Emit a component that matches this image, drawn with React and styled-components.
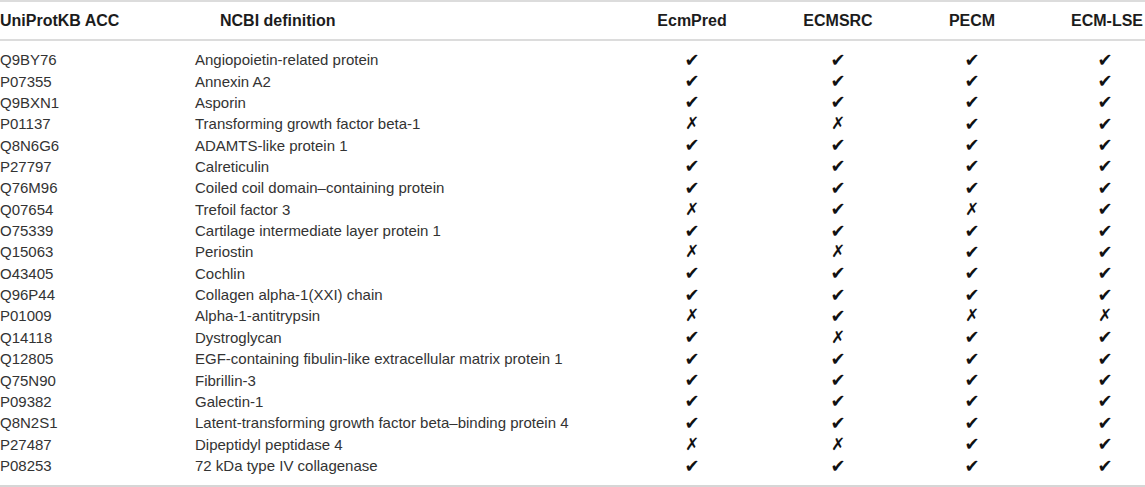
import React from 'react';
import styled, { createGlobalStyle } from 'styled-components';

const GlobalStyle = createGlobalStyle`
  html, body {
    margin: 0;
    padding: 0;
    background: #ffffff;
  }
  body {
    font-family: "Liberation Sans", Arial, sans-serif;
  }
`;

const COLUMNS = '195px 424px 146px 146px 122px 1fr';

const Table = styled.div`
  width: 1145px;
  border-top: 2px solid #dcdcdc;
  border-bottom: 2px solid #d6d6d6;
  overflow: hidden;
`;

const HeaderRow = styled.div`
  display: grid;
  grid-template-columns: ${COLUMNS};
  height: 37px;
  align-items: center;
  border-bottom: 2px solid #dcdcdc;
`;

const HeadCell = styled.div`
  font-size: 16px;
  font-weight: 700;
  color: #1c1c1c;
  white-space: nowrap;
  text-align: ${p => (p.$center ? 'center' : 'left')};
  padding-left: ${p => p.$indent || 0}px;
`;

const Body = styled.div`
  padding: 8px 0 9px;
`;

const Row = styled.div`
  display: grid;
  grid-template-columns: ${COLUMNS};
  height: 21.37px;
  align-items: center;
`;

const Cell = styled.div`
  font-size: 15px;
  color: #333333;
  white-space: nowrap;
`;

const Mark = styled.div`
  font-family: "DejaVu Sans", sans-serif;
  font-size: ${p => (p.$ok ? '18px' : '17px')};
  color: #111;
  text-align: center;
  padding-left: ${p => p.$indent || 0}px;
  line-height: 1;
`;

const rows = [
  ['Q9BY76', 'Angiopoietin-related protein', '1111'],
  ['P07355', 'Annexin A2', '1111'],
  ['Q9BXN1', 'Asporin', '1111'],
  ['P01137', 'Transforming growth factor beta-1', '0011'],
  ['Q8N6G6', 'ADAMTS-like protein 1', '1111'],
  ['P27797', 'Calreticulin', '1111'],
  ['Q76M96', 'Coiled coil domain–containing protein', '1111'],
  ['Q07654', 'Trefoil factor 3', '0101'],
  ['O75339', 'Cartilage intermediate layer protein 1', '1111'],
  ['Q15063', 'Periostin', '0011'],
  ['O43405', 'Cochlin', '1111'],
  ['Q96P44', 'Collagen alpha-1(XXI) chain', '1111'],
  ['P01009', 'Alpha-1-antitrypsin', '0100'],
  ['Q14118', 'Dystroglycan', '1011'],
  ['Q12805', 'EGF-containing fibulin-like extracellular matrix protein 1', '1111'],
  ['Q75N90', 'Fibrillin-3', '1111'],
  ['P09382', 'Galectin-1', '1111'],
  ['Q8N2S1', 'Latent-transforming growth factor beta–binding protein 4', '1111'],
  ['P27487', 'Dipeptidyl peptidase 4', '0011'],
  ['P08253', '72 kDa type IV collagenase', '1111'],
];

const tools = ['EcmPred', 'ECMSRC', 'PECM', 'ECM-LSE'];

export default function App() {
  return (
    <>
      <GlobalStyle />
      <Table>
        <HeaderRow>
          <HeadCell>UniProtKB ACC</HeadCell>
          <HeadCell $indent={25}>NCBI definition</HeadCell>
          {tools.map((t, i) => (
            <HeadCell key={t} $center $indent={i === 3 ? 36 : 0}>
              {t}
            </HeadCell>
          ))}
        </HeaderRow>
        <Body>
          {rows.map(([acc, def, marks]) => (
            <Row key={acc}>
              <Cell>{acc}</Cell>
              <Cell>{def}</Cell>
              {marks.split('').map((m, i) => (
                <Mark key={i} $ok={m === '1'} $indent={i === 3 ? 32 : 0}>
                  {m === '1' ? '✔' : '✗'}
                </Mark>
              ))}
            </Row>
          ))}
        </Body>
      </Table>
    </>
  );
}
